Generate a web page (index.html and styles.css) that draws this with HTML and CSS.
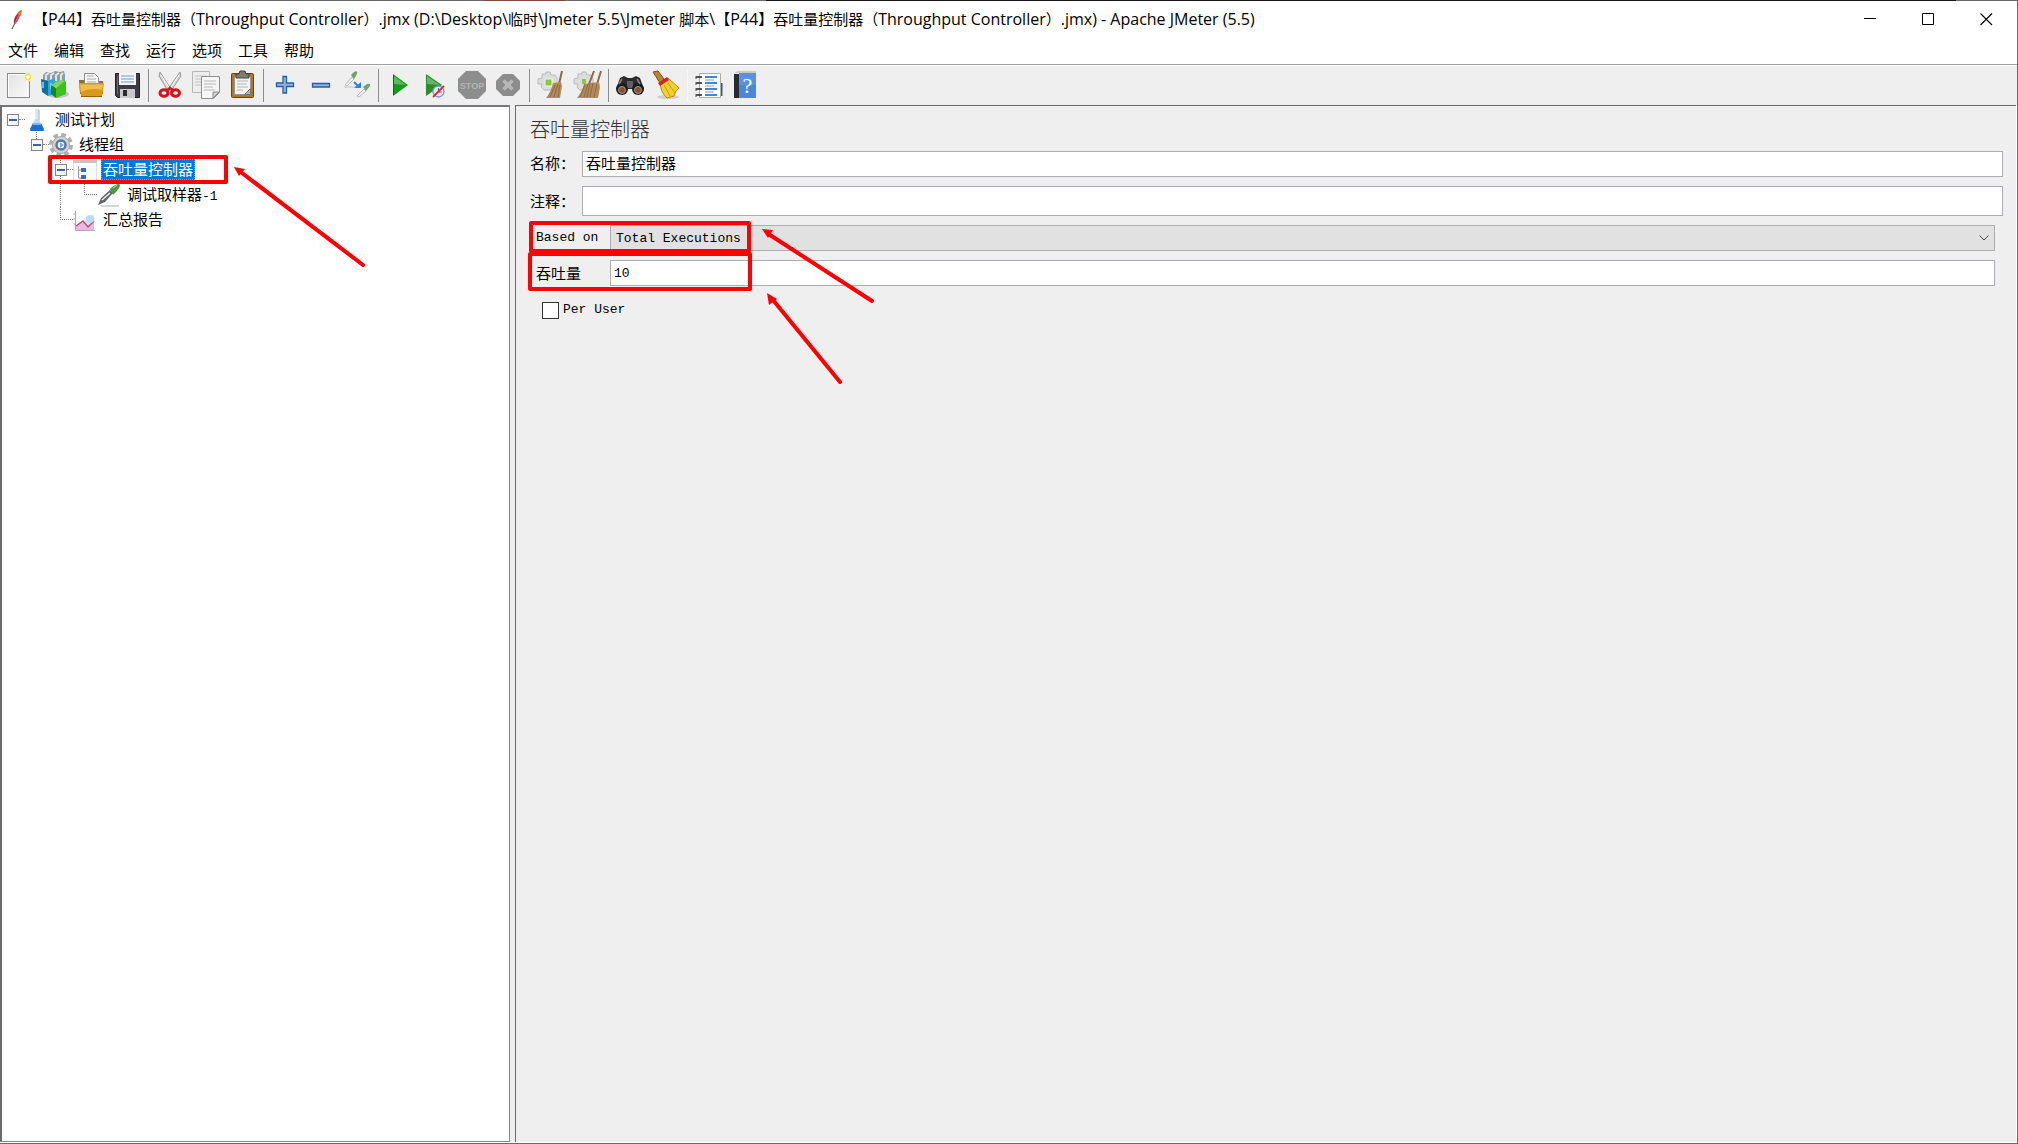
FILE: index.html
```html
<!DOCTYPE html>
<html lang="zh-CN">
<head>
<meta charset="utf-8">
<title>Apache JMeter (5.5)</title>
<link rel="stylesheet" href="styles.css">
</head>
<body>
<div class="window">
  <header class="titlebar">
    <svg class="app-icon" width="20" height="24" viewBox="0 0 20 24"><path d="M4 22 8 14" stroke="#4a3050" stroke-width="1"/><path d="M6 17Q5 12 9 7L13 4Q12 12 7 17Z" fill="#c8203c"/><path d="M9 7Q11 3 14 3L13 9Z" fill="#ef6a24"/><path d="M7 12 6 17 9 14Z" fill="#7b2a6e"/><path d="m7 16 5-10" stroke="#e9909a" stroke-width=".8"/></svg>
    <h1 class="window-title"><span class="cjk">【</span>P44<span class="cjk">】吞吐量控制器（</span>Throughput Controller<span class="cjk">）</span>.jmx (D:\Desktop\<span class="cjk">临时</span>\Jmeter 5.5\Jmeter <span class="cjk">脚本</span>\<span class="cjk">【</span>P44<span class="cjk">】吞吐量控制器（</span>Throughput Controller<span class="cjk">）</span>.jmx) - Apache JMeter (5.5)</h1>
    <div class="window-buttons">
      <button aria-label="最小化"><svg width="13" height="13" viewBox="0 0 13 13"><path d="M0 5.5H12" stroke="#000"/></svg></button>
      <button aria-label="最大化"><svg width="13" height="13" viewBox="0 0 13 13"><path d="M.5.5h11v11H.5z" fill="none" stroke="#000"/></svg></button>
      <button aria-label="关闭"><svg width="13" height="13" viewBox="0 0 13 13"><path d="m.5.5 11.5 11.5M12 .5.5 12" stroke="#000" stroke-width="1.1"/></svg></button>
    </div>
  </header>

  <nav class="menubar">
    <button>文件</button><button>编辑</button><button>查找</button><button>运行</button><button>选项</button><button>工具</button><button>帮助</button>
  </nav>

  <div class="toolbar" role="toolbar">
    <button aria-label="新建"><svg viewBox="0 0 30 30"><defs><linearGradient id="pg" x2="1" y2="1"><stop stop-color="#e2e2e2"/><stop offset="1" stop-color="#fbfbfb"/></linearGradient></defs><rect x="3.500" y="3.500" width="22" height="24" fill="url(#pg)" stroke="#8b8b88"/><path d="M4.500 26.500V4.500H25" fill="none" stroke="#fff"/><circle cx="24" cy="7" r="4.500" fill="#fff6a8" opacity=".8"/><circle cx="24" cy="7" r="2.500" fill="#fff" stroke="#f3e04a" stroke-width="1.500"/></svg></button>
    <button aria-label="模板"><svg viewBox="0 0 30 30"><ellipse cx="18" cy="24" rx="11" ry="4" fill="#c4c4c4"/><path d="M3 10V5l3-3 5 1 4-2 5 1 4-1 1 4v8H3z" fill="#8f9ca2"/><path d="M6 10V5l3-2M11 10V5l3-2m2 8V5l3-2m2 8V5l2-2" fill="none" stroke="#dfe5e7" stroke-width="2"/><path d="m1 9 7 2v15l-6-4z" fill="#0c6f9e"/><path d="m8 11 7-3v16l-7 2z" fill="#28a7dc"/><path d="M3 12v6M11 13v6" stroke="#8ed7f5" stroke-width="1.500"/><path d="m11 15 5 3v10l-5-4z" fill="#15891d"/><path d="m16 18 8-8 2 2v12l-10 4z" fill="#3ec01f"/><path d="m11 15 10-5 4 1-9 7z" fill="#7ed858"/></svg></button>
    <button aria-label="打开"><svg viewBox="0 0 30 30"><path d="M3 10h6v14H4z" fill="#a56a0a"/><path d="M8.500 3.500h10l4 4V17h-14z" fill="#f7f7f7" stroke="#8d8d8d"/><path d="M11 6h6m-6 3h9m-9 3h9" stroke="#a9a9a9"/><path d="M23 11h4v13h-4z" fill="#a56a0a"/><path d="M3 14q0-1 1-1h22q2 0 2 1l-2 12q0 1-1 1H6q-1 0-1-1z" fill="#d99a1c"/><path d="M4 14.500h23l-1 5Q12 18 5 22z" fill="#efbd50"/><path d="M5 26.500h21" stroke="#966008"/></svg></button>
    <button aria-label="保存"><svg viewBox="0 0 30 30"><path d="M3.500 3.500h24v24h-22l-2-2z" fill="#3c3c42" stroke="#232327"/><path d="M7 3h17v12H7z" fill="#f1f6fb"/><path d="M9 6h13M9 9h13M9 12h13" stroke="#9cbbd8" stroke-width="1.500"/><path d="M8 19h15v9H8z" fill="#c9c9c9"/><path d="M11 20h4v6h-4z" fill="#2c2c30"/><path d="M5.500 6v18" stroke="#6b6b73"/></svg></button>
    <span class="sep"></span>
    <button aria-label="剪切"><svg viewBox="0 0 30 30"><path d="m5 2 11 17-3 2L4 6zM25 2 13 19l3 2L26 6z" fill="#d5d5d5" stroke="#888" stroke-width=".8"/><path d="m6 5 9 14M24 5l-9 14" stroke="#fff"/><ellipse cx="9" cy="23" rx="4" ry="3.300" fill="none" stroke="#d3141c" stroke-width="3"/><ellipse cx="20.500" cy="23" rx="4" ry="3.300" fill="none" stroke="#d3141c" stroke-width="3"/><path d="m11 21 4-3 4 3" fill="none" stroke="#d3141c" stroke-width="2.500"/></svg></button>
    <button aria-label="复制"><svg viewBox="0 0 30 30"><path d="M1.500 1.500h17v21h-17z" fill="#eee" stroke="#b5b5b5"/><path d="M4 6h11M4 9h8M4 12h6M4 15h6" stroke="#c4c4c4"/><path d="M10.500 6.500h18v16l-6 6h-12z" fill="#f6f6f6" stroke="#8f8f8f"/><path d="m28 22-6 6v-6z" fill="#cfcfcf" stroke="#8f8f8f"/><path d="M13 11h12M13 14h12M13 17h9M13 20h11" stroke="#b7b7b7"/></svg></button>
    <button aria-label="粘贴"><svg viewBox="0 0 30 30"><rect x="4.500" y="3.500" width="22" height="24" rx="1" fill="#b8741a" stroke="#6e430a"/><path d="M7.500 6.500h16v18h-16z" fill="#f4f4f4" stroke="#999"/><path d="M10 11h11M10 14h10M10 17h11M10 20h6" stroke="#b3b3b3"/><path d="m23.500 18.500-6 6h6z" fill="#b4b4b4" stroke="#777"/><path d="M9 4h3l1-3h5l1 3h3v4H9z" fill="#7d7d72" stroke="#44443e"/></svg></button>
    <span class="sep"></span>
    <button aria-label="展开"><svg viewBox="0 0 30 30"><path d="M13 6.500h3.500V13h7v3.500h-7V23H13v-6.500H6.500V13H13z" fill="#8db5de" stroke="#2a5d9f" stroke-width="1.300"/></svg></button>
    <button aria-label="折叠"><svg viewBox="0 0 30 30"><path d="M6.500 13.500h17v3.500h-17z" fill="#8db5de" stroke="#2a5d9f" stroke-width="1.300"/></svg></button>
    <button aria-label="切换"><svg viewBox="0 0 30 30"><path d="m3 15 7-8 2 2-7 7z" fill="#eef1f4" stroke="#aaa" stroke-width=".8"/><path d="m9 5 3-3q4-2 3 2l-3 5z" fill="#6fa565"/><path d="M2 17h12" stroke="#d2d2d2" stroke-width="1.500"/><path d="m12 12 4 4" stroke="#2f82ee" stroke-width="2"/><path d="m19 12v6h-7z" fill="#2f82ee"/><path d="m15 26 7-7 2 2-7 6z" fill="#eef1f4" stroke="#aaa" stroke-width=".8"/><path d="m21 17 4-3q4-1 3 2l-4 5z" fill="#6fa565"/></svg></button>
    <span class="sep"></span>
    <button aria-label="启动"><svg viewBox="0 0 30 30"><path d="m8 4 15 11L8 26z" fill="#139a1c"/><path d="m9 6 12 9-12-1z" fill="#58bd58"/><path d="M8.500 5v20" stroke="#08640e"/></svg></button>
    <button aria-label="无停顿启动"><svg viewBox="0 0 30 30"><path d="m5 4 16 11L5 26z" fill="#2a8d2c"/><path d="m6 6 13 9-13-1z" fill="#66b668"/><circle cx="17.500" cy="21.500" r="5.500" fill="#dce9f8" stroke="#6a9cd4" stroke-width="1.300"/><path d="M17.500 18v4h3" fill="none" stroke="#557"/><path d="m12 27 11-11" stroke="#d72d2d" stroke-width="1.800"/></svg></button>
    <button aria-label="停止" disabled><svg viewBox="0 0 30 30"><path d="M9 1h12l8 8v12l-8 8H9l-8-8V9z" fill="#8d8d8d"/><text x="15" y="19" class="stop-text">STOP</text></svg></button>
    <button aria-label="关闭" disabled><svg viewBox="0 0 30 30"><path d="M10 4h10l7 7v8l-7 7H10l-7-7v-8z" fill="#8c8c8c"/><path d="m10.500 10.500 9 9m0-9-9 9" stroke="#b6b6b6" stroke-width="3.500"/></svg></button>
    <span class="sep"></span>
    <button aria-label="清除"><svg viewBox="0 0 30 30"><path d="m10 2 4 0 1 3 4 0 2 3v8l-5 4H8l-3-3 1-3H2V9l4-1V4h4z" fill="#dcdedc" stroke="#b8bbb8"/><path d="M9 9h7v7H9z" fill="#8cc63a" stroke="#eff5e2"/><path d="m26 1-3 13" stroke="#8b6a48" stroke-width="2"/><path d="m17 13 8-1 1 4-2 12H10q5-6 7-15z" fill="#b48a5c"/><path d="m19 15-5 12m8-13-4 13m6-12-2 12" stroke="#8d6a42"/></svg></button>
    <button aria-label="清除全部"><svg viewBox="0 0 30 30"><path d="m10 2 4 0 1 3 4 0 2 3v8l-5 4H8l-3-3 1-3H2V9l4-1V4h4z" fill="#dcdedc" stroke="#b8bbb8"/><path d="M10 9h4v5h-4z" fill="#8cc63a"/><path d="m22 1-5 13M29 1l-4 13" stroke="#8b6a48" stroke-width="2"/><path d="m12 14 7-1 8-1 1 5-2 11H5q5-6 7-14z" fill="#b48a5c"/><path d="m13 15-5 12m8-13-4 13m6-14-3 14m6-14-3 14m7-13-3 13" stroke="#8d6a42"/></svg></button>
    <span class="sep"></span>
    <button aria-label="查找"><svg viewBox="0 0 30 30"><path d="m5 8 4-2 4 2h4l4-2 4 2 4 11H1z" fill="#2b2b2d"/><path d="M12 11h6v7h-6z" fill="#606065"/><circle cx="7" cy="19" r="6" fill="#1c1c1e"/><circle cx="23" cy="19" r="6" fill="#1c1c1e"/><circle cx="7" cy="20" r="3.500" fill="#8a4f30" stroke="#a09690"/><circle cx="23" cy="20" r="3.500" fill="#8a4f30" stroke="#a09690"/><path d="m7 9-3 5m18-5 3 5" stroke="#85858b" stroke-width="1.500"/></svg></button>
    <button aria-label="重置查找"><svg viewBox="0 0 30 30"><ellipse cx="17" cy="27" rx="11" ry="2" fill="#cfcfcf"/><path d="m2 2 5-1 6 8-4 4z" fill="#b98434" stroke="#7a4f12"/><path d="m9 13 8-5 11 10-3 3-2 5-7 2q-6-5-7-15z" fill="#f3cf2c" stroke="#b78b0c"/><path d="m13 15 6 11m-2-13 7 10" stroke="#c79c14"/><path d="m7 13 9-6 2 3-9 6z" fill="#d3242a"/></svg></button>
    <span class="sep faint"></span>
    <button aria-label="函数助手"><svg viewBox="0 0 30 30"><path d="M27 13v7" stroke="#1452d8" stroke-width="3"/><path d="M27 20v6" stroke="#14862a" stroke-width="3"/><path d="M5.500 3.500h21v24h-21z" fill="#fff" stroke="#aaa"/><path d="M11 7h12M11 13h12M11 19h12M11 25h12" stroke="#3b86e8" stroke-width="2"/><path d="M11 10h9M11 16h9M11 22h9" stroke="#9b9b9b"/><path d="M2 7h6M2 13h6M2 19h6M2 25h6" stroke="#222" stroke-width="1.500"/><path d="M2 6v3m0 3v3m0 3v3m0 3v3" stroke="#555"/></svg></button>
    <button aria-label="帮助"><svg viewBox="0 0 30 30"><path d="m4 4 3-3h19v2H8z" fill="#c9c9c9"/><path d="M4 4h6v24H4z" fill="#252a33"/><path d="M9 3h17v25H9z" fill="#4b87d8"/><path d="M9 3h17v12H9z" fill="#5a92dd"/><text x="17.500" y="23" class="help-text">?</text></svg></button>
  </div>

  <main class="workspace">
    <aside class="tree-pane">
      <ul class="tree">
        <li>
          <div class="row"><button class="expander" aria-label="折叠"></button><i class="link"></i><svg class="node" viewBox="0 0 24 24"><path d="M10 1h4v11h-4z" fill="#dfe5ea"/><path d="M14 2v10" stroke="#a5adb5"/><path d="m10 11-5 12h14l-5-12z" fill="#c4d8ee"/><path d="m8 15-3 6q0 2 1 2h12q1 0 1-2l-3-6z" fill="#1f6fc9"/><path d="M8 16h8" stroke="#7fb4ee" stroke-width="2"/></svg><span class="label">测试计划</span></div>
          <ul>
            <li>
              <div class="row"><button class="expander" aria-label="折叠"></button><i class="link"></i><svg class="node" viewBox="0 0 24 24"><circle cx="12" cy="12" r="10" fill="none" stroke="#b0b0b0" stroke-width="4" stroke-dasharray="4.500 3.350"/><circle cx="12" cy="12" r="8.500" fill="#d2d2d2" stroke="#aaa"/><circle cx="12" cy="12" r="4.500" fill="#f4f8fd" stroke="#5577a8" stroke-width="2.500"/><path d="m11 9 4 3-4 3z" fill="#86a5d0"/></svg><span class="label">线程组</span></div>
              <ul>
                <li>
                  <div class="row"><button class="expander" aria-label="折叠"></button><i class="link"></i><svg class="node" viewBox="0 0 24 24"><path d="M.500 2.500h23v21H.500z" fill="#fafafa" stroke="#dedede"/><path d="M0 2h24v3H0z" fill="#c6c6c6"/><path d="M5.500 8v12H9M5.500 12H9" fill="none" stroke="#99a" /><path d="M8 10h5v4H8zM8 17h5v4H8z" fill="#2d6fc4"/></svg><span class="label selected">吞吐量控制器</span></div>
                  <ul>
                    <li><div class="row leaf"><i class="link long"></i><svg class="node" viewBox="0 0 24 24"><path d="M4 23h18" stroke="#d6d6d6" stroke-width="2"/><path d="m1 22 3-7 9-8 3 3-8 9z" fill="#62666a"/><path d="m5 17 8-7" stroke="#eee" stroke-width="1.500"/><path d="m13 6 2-2q7-5 8-2 0 3-5 8l-2 2z" fill="#4a9b3e"/><path d="m16 5 4-3" stroke="#93cf82" stroke-width="1.500"/></svg><span class="label">调试取样器<span class="mono">-1</span></span></div></li>
                  </ul>
                </li>
                <li><div class="row leaf"><i class="link long"></i><svg class="node" viewBox="0 0 24 24"><path d="M2.500 3v19.500H22" fill="none" stroke="#aaa"/><path d="M0 6h2M0 11h2M0 16h2" stroke="#bbb"/><path d="m12 13 3-4 6-2v15h-9z" fill="#d3e5fb"/><path d="m3 18 7-5 5 5 6-5v9H3z" fill="#efb6e6"/><path d="m3 18 7-5 5 6 6-6" fill="none" stroke="#c44a73" stroke-width="1.500"/><circle cx="17" cy="11" r="4" fill="#b9dafa"/></svg><span class="label">汇总报告</span></div></li>
              </ul>
            </li>
          </ul>
        </li>
      </ul>
    </aside>

    <section class="editor">
      <h2>吞吐量控制器</h2>
      <form>
        <div class="field name"><label for="name">名称：</label><input id="name" type="text" value="吞吐量控制器"></div>
        <div class="field comment"><label for="comment">注释：</label><input id="comment" type="text"></div>
        <div class="details">
          <div class="field"><label class="mono" for="based">Based on</label><div class="combo"><select id="based" class="mono"><option>Total Executions</option></select><svg width="10" height="6" viewBox="0 0 10 6"><path d="m.5.5 4.500 4.500L9.500.5" fill="none" stroke="#444"/></svg></div></div>
          <div class="field"><label for="amount">吞吐量</label><input id="amount" class="mono" type="text" value="10"></div>
          <label class="check mono"><input type="checkbox">Per User</label>
        </div>
      </form>
    </section>
  </main>

  <svg class="marks" width="900" height="400" viewBox="0 0 900 400">
    <g fill="none" stroke="#f00" stroke-width="4" stroke-linejoin="round" stroke-linecap="round">
      <path d="M50 157H226V182H50z"/><path d="M531 223H749V251H531z"/><path d="M530 254H750V289H530z"/>
      <path d="M363 265 242 173M872 301 770 235M840 382 773 300"/>
    </g>
    <path fill="#f00" d="m234 167 11 2-6 7zM762 229l11 1-5 8zM767 293l10 6-8 6z"/>
  </svg>
</div>
</body>
</html>
```

FILE: styles.css
```css
* { box-sizing: border-box; }
body {
  margin: 0;
  color: #000;
  font: 15px/20px "Noto Sans CJK SC", sans-serif;
}
button {
  border: 0;
  padding: 0;
  background: none;
  color: inherit;
  font: inherit;
}
.mono { font-family: "Liberation Mono", "Noto Sans CJK SC", monospace; font-size: 13px; }

.window {
  position: relative;
  display: flex;
  flex-direction: column;
  min-height: 100vh;
  background: #fff;
  border-right: 1px solid #6a6a6a;
  border-bottom: 1px solid #6a6a6a;
}
.window::before {
  content: "";
  height: 1px;
  background: linear-gradient(90deg, #6a6a6a 24%, #7c4a3e 24%, #7c4a3e 28%, #6a6a6a 28%, #6a6a6a 38%, #161616 38%, #161616 97%, #6a6a6a 97%);
}

/* Title bar */
.titlebar { display: flex; align-items: center; height: 36px; padding-left: 8px; }
.app-icon { flex: none; }
.window-title {
  flex: 1;
  margin: 0 0 0 5px;
  font: 16px/20px "Open Sans", "Noto Sans CJK SC", sans-serif;
  white-space: nowrap;
}
.cjk { font-family: "Noto Sans CJK SC", sans-serif; font-size: 15px; }
.window-buttons { display: flex; align-self: stretch; margin-right: 2px; }
.window-buttons button { display: grid; place-items: center; width: 58px; }

/* Menus */
.menubar {
  display: flex;
  gap: 16px;
  height: 28px;
  padding: 0 8px 2px;
  border-bottom: 1px solid #a0a0a0;
}

/* Toolbar */
.toolbar {
  display: flex;
  align-items: center;
  height: 40px;
  padding-left: 1px;
  border-top: 1px solid #fff;
  background: #efefef;
}
.toolbar button { display: grid; place-items: center; width: 36px; height: 38px; padding-bottom: 2px; }
.toolbar svg { width: 30px; height: 30px; }
.sep { width: 1px; height: 33px; margin: 0 3px; background: #8c8c8c; }
.sep.faint { background: #f8f8f8; }
.stop-text { font: bold 9px "Liberation Sans", sans-serif; fill: #b4b4b4; text-anchor: middle; }
.help-text { font: 22px "Liberation Serif", serif; fill: #fff; text-anchor: middle; }

/* Split workspace */
.workspace { display: flex; flex: 1; gap: 5px; background: #efefef; margin-right: 1px; margin-bottom: 1px; }
.tree-pane {
  flex: none;
  width: 510px;
  background: #fff;
  border: 1px solid #828790;
  border-top: 2px solid #77777c;
  border-left: 2px solid #6b6b70;
}
.tree, .tree ul { margin: 0; padding: 0; list-style: none; }
.tree ul { padding-left: 24px; }
.tree li { position: relative; }
.tree ul > li::before {
  content: "";
  position: absolute;
  top: 0;
  bottom: 0;
  left: 10px;
  border-left: 1px dotted #808080;
}
.tree ul > li:last-child::before { bottom: auto; height: 13px; }
.row { position: relative; display: flex; align-items: center; height: 25px; padding-left: 5px; }
.row.leaf { padding-left: 10px; }
.expander {
  flex: none;
  width: 12px;
  height: 12px;
  border: 1px solid #848484;
  background: linear-gradient(#3f5fa8, #3f5fa8) center / 8px 2px no-repeat #f6f6f6;
}
.link { width: 6px; border-top: 1px dotted #808080; }
.link.long { width: 13px; }
.node { flex: none; width: 24px; height: 24px; margin-right: 4px; }
.label { height: 21px; padding: 0 2px; line-height: 19px; }
.selected { background: #0078d7; color: #fff; outline: 1px dotted #d98a3a; outline-offset: -1px; }

/* Editor */
.editor {
  flex: 1;
  min-width: 0;
  padding: 10px 13px 0 14px;
  border-top: 1px solid #6b6b6b;
  border-left: 1px solid #6b6b6b;
}
.editor h2 { margin: 0 0 9px; font-size: 20px; line-height: 26px; font-weight: 300; color: #333; }
form { display: flex; flex-direction: column; gap: 9px; }
.field { display: flex; align-items: center; height: 26px; }
.field > label { flex: none; width: 52px; }
.field input, .field select {
  flex: 1;
  align-self: stretch;
  min-width: 0;
  width: 100%;
  height: 100%;
  margin: 0;
  padding: 0 3px;
  border: 1px solid #abadb3;
  border-radius: 0;
  background: #fff;
  color: #000;
}
.field input:not(.mono) { padding-bottom: 3px; font: 15px/20px "Noto Sans CJK SC", sans-serif; }
.name label { padding-bottom: 2px; }
.comment { height: 30px; }
.details { display: flex; flex-direction: column; gap: 9px; padding: 0 8px 0 6px; }
.details .field > label { width: 74px; }
.combo { position: relative; flex: 1; align-self: stretch; }
.combo select { appearance: none; padding: 0 5px; background: #e1e1e1; border-color: #adadad; }
.combo svg { position: absolute; right: 6px; top: 10px; pointer-events: none; }
.check { display: flex; align-items: center; gap: 4px; height: 30px; padding-left: 6px; }
.check input { appearance: none; width: 17px; height: 17px; margin: 0; border: 1px solid #333; background: #fff; }

/* Highlight boxes and arrows over the window */
.marks { position: absolute; top: 0; left: 0; pointer-events: none; }
```
